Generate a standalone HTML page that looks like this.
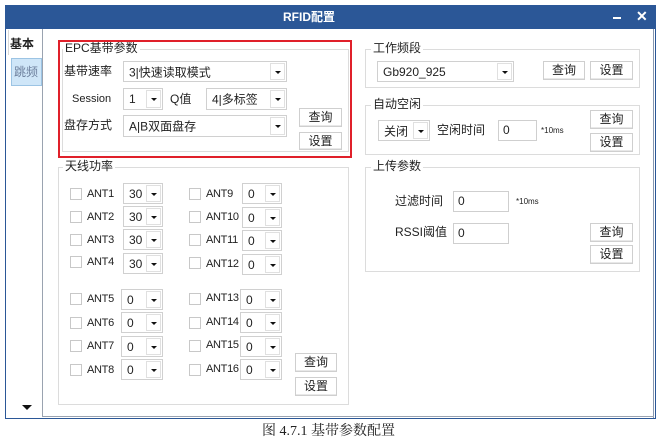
<!DOCTYPE html>
<html><head><meta charset="utf-8"><style>
*{box-sizing:border-box;margin:0;padding:0}
body{width:660px;height:444px;background:#fff;position:relative;overflow:hidden;font-family:"Liberation Sans","Noto Sans CJK SC",sans-serif;font-size:12px;color:#222}
.a{position:absolute}
.t{position:absolute;white-space:nowrap;line-height:14px}
.an{font-size:11px;letter-spacing:-0.3px}
.grp{position:absolute;border:1px solid #dcdcdc}
.lg{position:absolute;background:#fff;padding:0 2px;font-size:12px;line-height:14px;white-space:nowrap;color:#222}
.cb{position:absolute;border:1px solid #d0d0d0;background:#fff}
.cb span{position:absolute;left:5px;top:50%;transform:translateY(-50%);white-space:nowrap;font-size:12px}
.cb i{position:absolute;right:1px;top:1px;bottom:1px;width:15px;border:1px solid #e0e0e0;background:#fff}
.cb i:after{content:"";position:absolute;left:4px;top:50%;margin-top:-1px;border-left:3px solid transparent;border-right:3px solid transparent;border-top:3px solid #111}
.btn{position:absolute;border:1px solid #cfcfcf;background:#fff;text-align:center;font-size:12px;box-shadow:inset 0 -1px 0 #e8e8e8}
.in{position:absolute;border:1px solid #cfcfcf;background:#fff;padding-left:4px;font-size:12px}
.ck{position:absolute;width:12px;height:12px;border:1px solid #c8c8c8;background:#fff}
</style></head><body>
<div class="a" style="left:5px;top:5px;width:651px;height:414px;border:1px solid #2b5797;border-top:none;background:#fff"></div>
<div class="a" style="left:5px;top:5px;width:651px;height:24px;background:#2b5797"></div>
<div class="t" style="left:283px;top:10px;color:#fff;font-weight:bold;font-size:12px">RFID配置</div>
<div class="a" style="left:613px;top:17px;width:8px;height:2px;background:#fff"></div>
<div class="t" style="left:636px;top:9px;color:#fff;font-weight:bold;font-size:14px">✕</div>
<div class="a" style="left:653px;top:29px;width:1px;height:389px;background:#8898b0"></div>
<div class="a" style="left:8px;top:30px;width:35px;height:25px;background:#fff;border-left:1px solid #d8d8d8"></div>
<div class="t" style="left:10px;top:37px;font-weight:bold;font-size:12px">基本</div>
<div class="a" style="left:11px;top:58px;width:31px;height:28px;background:#cfe6f8;border:1px solid #9cc4e4"></div>
<div class="t" style="left:14px;top:65px;color:#6c7f9c;font-size:12px">跳频</div>
<div class="a" style="left:42px;top:29px;width:1px;height:388px;background:#9aa3b0"></div>
<div class="a" style="left:42px;top:416px;width:612px;height:1px;background:#9aa3b0"></div>
<div class="a" style="left:22px;top:405px;border-left:5px solid transparent;border-right:5px solid transparent;border-top:5px solid #111"></div>

<div class="grp" style="left:62px;top:49px;width:287px;height:103px"></div>
<div class="lg" style="left:63px;top:41px">EPC基带参数</div>
<div class="a" style="left:58px;top:40px;width:294px;height:118px;border:2px solid #e0202a"></div>
<div class="t" style="left:64px;top:64px">基带速率</div>
<div class="cb" style="left:123px;top:61px;width:164px;height:21px"><span>3|快速读取模式</span><i></i></div>
<div class="t" style="left:72px;top:92px;font-size:11px">Session</div>
<div class="cb" style="left:123px;top:88px;width:40px;height:22px"><span>1</span><i></i></div>
<div class="t" style="left:170px;top:92px">Q值</div>
<div class="cb" style="left:206px;top:88px;width:81px;height:22px"><span>4|多标签</span><i></i></div>
<div class="t" style="left:64px;top:118px">盘存方式</div>
<div class="cb" style="left:123px;top:115px;width:164px;height:22px"><span>A|B双面盘存</span><i></i></div>
<div class="btn" style="left:299px;top:108px;width:43px;height:19px;line-height:17px">查询</div>
<div class="btn" style="left:299px;top:132px;width:43px;height:18px;line-height:16px">设置</div>

<div class="grp" style="left:58px;top:167px;width:291px;height:238px"></div>
<div class="lg" style="left:63px;top:159px">天线功率</div>

<div class="ck" style="left:70px;top:188px"></div><div class="t an" style="left:87px;top:187px">ANT1</div><div class="cb" style="left:123px;top:183px;width:40px;height:21px"><span>30</span><i></i></div>
<div class="ck" style="left:70px;top:211px"></div><div class="t an" style="left:87px;top:210px">ANT2</div><div class="cb" style="left:123px;top:206px;width:40px;height:21px"><span>30</span><i></i></div>
<div class="ck" style="left:70px;top:234px"></div><div class="t an" style="left:87px;top:233px">ANT3</div><div class="cb" style="left:123px;top:229px;width:40px;height:21px"><span>30</span><i></i></div>
<div class="ck" style="left:70px;top:256px"></div><div class="t an" style="left:87px;top:255px">ANT4</div><div class="cb" style="left:123px;top:253px;width:40px;height:21px"><span>30</span><i></i></div>
<div class="ck" style="left:70px;top:293px"></div><div class="t an" style="left:87px;top:292px">ANT5</div><div class="cb" style="left:121px;top:289px;width:42px;height:21px"><span>0</span><i></i></div>
<div class="ck" style="left:70px;top:317px"></div><div class="t an" style="left:87px;top:316px">ANT6</div><div class="cb" style="left:121px;top:312px;width:42px;height:21px"><span>0</span><i></i></div>
<div class="ck" style="left:70px;top:340px"></div><div class="t an" style="left:87px;top:339px">ANT7</div><div class="cb" style="left:121px;top:336px;width:42px;height:21px"><span>0</span><i></i></div>
<div class="ck" style="left:70px;top:364px"></div><div class="t an" style="left:87px;top:363px">ANT8</div><div class="cb" style="left:121px;top:359px;width:42px;height:21px"><span>0</span><i></i></div>

<div class="ck" style="left:189px;top:188px"></div><div class="t an" style="left:206px;top:187px">ANT9</div><div class="cb" style="left:242px;top:183px;width:40px;height:21px"><span>0</span><i></i></div>
<div class="ck" style="left:189px;top:211px"></div><div class="t an" style="left:206px;top:210px">ANT10</div><div class="cb" style="left:242px;top:207px;width:40px;height:21px"><span>0</span><i></i></div>
<div class="ck" style="left:189px;top:234px"></div><div class="t an" style="left:206px;top:233px">ANT11</div><div class="cb" style="left:242px;top:230px;width:40px;height:21px"><span>0</span><i></i></div>
<div class="ck" style="left:189px;top:257px"></div><div class="t an" style="left:206px;top:257px">ANT12</div><div class="cb" style="left:242px;top:254px;width:40px;height:21px"><span>0</span><i></i></div>
<div class="ck" style="left:189px;top:293px"></div><div class="t an" style="left:206px;top:291px">ANT13</div><div class="cb" style="left:240px;top:289px;width:42px;height:21px"><span>0</span><i></i></div>
<div class="ck" style="left:189px;top:317px"></div><div class="t an" style="left:206px;top:315px">ANT14</div><div class="cb" style="left:240px;top:312px;width:42px;height:21px"><span>0</span><i></i></div>
<div class="ck" style="left:189px;top:340px"></div><div class="t an" style="left:206px;top:338px">ANT15</div><div class="cb" style="left:240px;top:336px;width:42px;height:21px"><span>0</span><i></i></div>
<div class="ck" style="left:189px;top:364px"></div><div class="t an" style="left:206px;top:362px">ANT16</div><div class="cb" style="left:240px;top:359px;width:42px;height:21px"><span>0</span><i></i></div>
<div class="btn" style="left:295px;top:353px;width:42px;height:19px;line-height:17px">查询</div>
<div class="btn" style="left:295px;top:377px;width:42px;height:19px;line-height:17px">设置</div>

<div class="grp" style="left:365px;top:49px;width:275px;height:39px"></div>
<div class="lg" style="left:371px;top:41px">工作频段</div>
<div class="cb" style="left:377px;top:61px;width:137px;height:21px"><span>Gb920_925</span><i></i></div>
<div class="btn" style="left:543px;top:61px;width:42px;height:19px;line-height:17px">查询</div>
<div class="btn" style="left:590px;top:61px;width:43px;height:19px;line-height:17px">设置</div>

<div class="grp" style="left:365px;top:105px;width:275px;height:50px"></div>
<div class="lg" style="left:371px;top:97px">自动空闲</div>
<div class="cb" style="left:378px;top:120px;width:52px;height:21px"><span>关闭</span><i></i></div>
<div class="t" style="left:437px;top:123px">空闲时间</div>
<div class="in" style="left:498px;top:120px;width:39px;height:21px;line-height:19px">0</div>
<div class="t" style="left:541px;top:124px;font-size:8px">*10ms</div>
<div class="btn" style="left:590px;top:110px;width:43px;height:19px;line-height:17px">查询</div>
<div class="btn" style="left:590px;top:133px;width:43px;height:19px;line-height:17px">设置</div>

<div class="grp" style="left:365px;top:167px;width:275px;height:105px"></div>
<div class="lg" style="left:371px;top:159px">上传参数</div>
<div class="t" style="left:395px;top:194px">过滤时间</div>
<div class="in" style="left:453px;top:191px;width:56px;height:21px;line-height:19px">0</div>
<div class="t" style="left:516px;top:195px;font-size:8px">*10ms</div>
<div class="t" style="left:395px;top:225px">RSSI阈值</div>
<div class="in" style="left:453px;top:223px;width:56px;height:21px;line-height:19px">0</div>
<div class="btn" style="left:590px;top:223px;width:43px;height:19px;line-height:17px">查询</div>
<div class="btn" style="left:590px;top:245px;width:43px;height:19px;line-height:17px">设置</div>

<div class="t" style="left:262px;top:424px;font-family:'Liberation Serif','Noto Serif CJK SC',serif;font-size:14px;color:#222;line-height:16px">图 4.7.1 基带参数配置</div>
</body></html>
